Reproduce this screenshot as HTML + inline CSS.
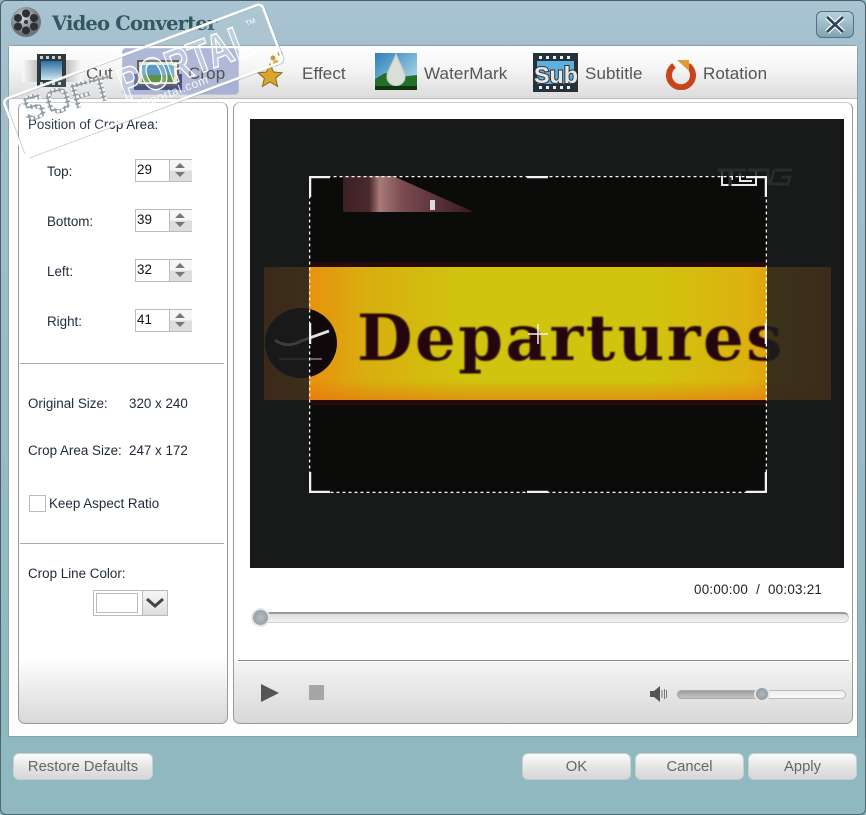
<!DOCTYPE html>
<html><head><meta charset="utf-8"><title>Video Converter</title>
<style>
html,body{margin:0;padding:0;background:#fff}
#w{position:relative;width:866px;height:815px;overflow:hidden;font:13.4px/16px "Liberation Sans",sans-serif;color:#1e2a3a;background:#8fb8bf}
#w div,#w span.t{position:absolute}
.t{position:absolute;white-space:nowrap}
.lbl{font-size:17px;line-height:20px;color:#555;letter-spacing:.1px}
.sp{left:135px;width:57px;height:23px;border:1px solid #bbb;background:#fff;box-sizing:border-box}
.sp i{position:absolute;left:33px;top:0;width:22px;height:21px;border-left:1px solid #bbb;background:linear-gradient(#f6f6f6 50%,#ddd 50%)}
.sp i:before{content:"";position:absolute;left:5px;top:3px;border:5px solid transparent;border-top:0;border-bottom:5px solid #777}
.sp i:after{content:"";position:absolute;left:5px;top:12px;border:5px solid transparent;border-bottom:0;border-top:5px solid #777}
.sp b{position:absolute;left:1px;top:2px;font-weight:400;font-size:13.400px;color:#111}
.hr{height:1px;background:#a8a8a8}
.btn{box-sizing:border-box;height:27px;border:1px solid #c3cfd0;border-radius:6px;background:linear-gradient(#fbfbfb,#e4e4e4 55%,#d6d6d6);text-align:center;font-size:14.800px;line-height:27px;color:#666}
</style></head><body>
<div id="w">
<!-- frame -->
<div style="left:0;top:0;width:866px;height:815px;box-sizing:border-box;border:1px solid #4d5d66;border-radius:6px;background:linear-gradient(#a9c4d2 0,#a4bfcd 46px,#8fb8bf 740px)"></div>
<div style="left:0;top:738px;width:866px;height:77px;box-sizing:border-box;border:1px solid #4d6a70;border-top:0;border-radius:0 0 6px 6px;background:#8fb8bf"></div>
<!-- title -->
<svg style="position:absolute;left:10px;top:6px" width="32" height="32" viewBox="0 0 32 32"><defs><radialGradient id="rg" cx=".4" cy=".35"><stop offset="0" stop-color="#d8d8d8"/><stop offset="1" stop-color="#6e7478"/></radialGradient></defs><circle cx="16" cy="16" r="15" fill="url(#rg)"/><g fill="#2b3036"><circle cx="16" cy="7.500" r="4"/><circle cx="16" cy="24.500" r="4"/><circle cx="8" cy="12" r="4"/><circle cx="24" cy="12" r="4"/><circle cx="8" cy="20.500" r="4"/><circle cx="24" cy="20.500" r="4"/></g><circle cx="16" cy="16" r="2" fill="#333"/></svg>
<span class="t" style="left:52px;top:11px;font:bold 19.500px/26px 'DejaVu Serif',serif;color:#33585f;letter-spacing:-.8px">Video Converter</span>
<div style="left:816px;top:11px;width:38px;height:27px;box-sizing:border-box;border:1px solid #56707c;border-radius:6px;background:linear-gradient(#b5d0dc,#7fa5b4)"></div>
<svg style="position:absolute;left:816px;top:11px" width="38" height="27"><path d="M11 6 L27 21 M27 6 L11 21" stroke="#fff" stroke-width="5"/><path d="M11 6 L27 21 M27 6 L11 21" stroke="#2c4556" stroke-width="2.600"/></svg>
<!-- client -->
<div style="left:8px;top:45px;width:850px;height:692px;box-sizing:border-box;border:1px solid #8aa0a8;border-radius:4px 4px 0 0;background:#fdfdfd"></div>
<div style="left:9px;top:46px;width:848px;height:52px;background:linear-gradient(#fff,#f6f6f6 40%,#dcdcdc);border-bottom:1px solid #bbb"></div>
<!-- toolbar -->
<div style="left:122px;top:48px;width:117px;height:47px;border-radius:4px;background:#a9b2d4;border:1px solid #bcc3db;box-sizing:border-box"></div>
<svg style="position:absolute;left:22px;top:52px" width="60" height="40"><defs><linearGradient id="fb" x1="0" y1="0" x2="0" y2="1"><stop offset="0" stop-color="#2d6fa0"/><stop offset="1" stop-color="#cfe8f0"/></linearGradient><linearGradient id="fd" x1="0" y1="0" x2="1" y2="0"><stop offset="0" stop-color="#fafafa"/><stop offset=".3" stop-color="#b8b8b8"/><stop offset=".7" stop-color="#b8b8b8"/><stop offset="1" stop-color="#fafafa"/></linearGradient></defs><rect x="0" y="8" width="60" height="22" fill="url(#fd)"/><rect x="15" y="2" width="29" height="33" fill="#2e3a40"/><rect x="19" y="9" width="21" height="19" fill="url(#fb)"/><g fill="#c9ced2"><rect x="18" y="4" width="3" height="3"/><rect x="24" y="4" width="3" height="3"/><rect x="30" y="4" width="3" height="3"/><rect x="36" y="4" width="3" height="3"/><rect x="18" y="30" width="3" height="3"/><rect x="24" y="30" width="3" height="3"/><rect x="30" y="30" width="3" height="3"/><rect x="36" y="30" width="3" height="3"/></g></svg>
<span class="t lbl" style="left:86px;top:64px;color:#444">Cut</span>
<svg style="position:absolute;left:130px;top:54px" width="56" height="36"><rect x="4" y="20" width="48" height="16" fill="#37457a"/><rect x="8" y="7" width="40" height="24" fill="#dbe0cf" stroke="#555" stroke-width="2"/><rect x="12" y="11" width="32" height="10" fill="#4d93c2"/><rect x="12" y="21" width="32" height="7" fill="#4f8a3a"/></svg>
<span class="t lbl" style="left:188px;top:64px;color:#444">Crop</span>
<svg style="position:absolute;left:255px;top:50px" width="32" height="42"><path d="M15 14l3.500 8 8.500.8-6.400 5.400 2 8.300-7.600-4.500-7.600 4.500 2-8.300L3 22.800l8.500-.8z" fill="#d9a52c" stroke="#8f6a1a"/><circle cx="21" cy="13" r="3" fill="#d9a52c"/><circle cx="18" cy="8" r="2.500" fill="#c98f24"/><circle cx="25" cy="3.500" r="2.500" fill="#c98f24"/></svg>
<span class="t lbl" style="left:302px;top:64px">Effect</span>
<svg style="position:absolute;left:375px;top:53px" width="42" height="38"><defs><linearGradient id="sk" x1="0" y1="0" x2="1" y2="1"><stop offset="0" stop-color="#2d7fb8"/><stop offset="1" stop-color="#bfe6f2"/></linearGradient></defs><rect x="0" y="0" width="42" height="37" fill="url(#sk)"/><path d="M0 37V26l10-6 14 4 18-2v15z" fill="#256f2b"/><rect y="33" width="42" height="4" fill="#12340f"/><path d="M21 1C17 12 12 18 12 24a9 8.500 0 0 0 18 0C30 18 25 12 21 1z" fill="#d9dfd6" stroke="#c9cfc6"/></svg>
<span class="t lbl" style="left:424px;top:64px">WaterMark</span>
<svg style="position:absolute;left:533px;top:53px" width="46" height="40"><rect x="0" y="0" width="45" height="39" fill="#25323c"/><rect x="4" y="8" width="37" height="23" fill="#5bb0e0"/><g fill="#eee"><rect x="6" y="3" width="3" height="3"/><rect x="13" y="3" width="3" height="3"/><rect x="20" y="3" width="3" height="3"/><rect x="27" y="3" width="3" height="3"/><rect x="34" y="3" width="3" height="3"/><rect x="6" y="33" width="3" height="3"/><rect x="13" y="33" width="3" height="3"/><rect x="20" y="33" width="3" height="3"/><rect x="27" y="33" width="3" height="3"/><rect x="34" y="33" width="3" height="3"/></g><text x="1" y="30" font-family="Liberation Sans" font-weight="700" font-size="23" textLength="44" lengthAdjust="spacingAndGlyphs" fill="#e8e8e8" stroke="#333" stroke-width="2" paint-order="stroke">Sub</text></svg>
<span class="t lbl" style="left:585px;top:64px">Subtitle</span>
<svg style="position:absolute;left:665px;top:58px" width="32" height="32"><path d="M9 7.500a12 12 0 1 0 14 0" fill="none" stroke="#c8441a" stroke-width="6"/><path d="M12 2h12v11z" fill="#e09a3a"/></svg>
<span class="t lbl" style="left:703px;top:64px">Rotation</span>
<!-- left panel -->
<div style="left:18px;top:102px;width:210px;height:622px;box-sizing:border-box;border:1px solid #9a9a9a;border-top-color:#ccc;border-radius:7px;background:linear-gradient(#fff,#fff 555px,#d8d8d8)"></div>
<span class="t" style="left:28px;top:117px">Position of Crop Area:</span>
<span class="t" style="left:47px;top:164px">Top:</span>
<span class="t" style="left:47px;top:214px">Bottom:</span>
<span class="t" style="left:47px;top:264px">Left:</span>
<span class="t" style="left:47px;top:314px">Right:</span>
<div class="sp" style="top:159px"><b>29</b><i></i></div>
<div class="sp" style="top:209px"><b>39</b><i></i></div>
<div class="sp" style="top:259px"><b>32</b><i></i></div>
<div class="sp" style="top:309px"><b>41</b><i></i></div>
<div class="hr" style="left:20px;top:363px;width:204px"></div>
<span class="t" style="left:28px;top:396px">Original Size:</span>
<span class="t" style="left:129px;top:396px">320 x 240</span>
<span class="t" style="left:28px;top:443px">Crop Area Size:</span>
<span class="t" style="left:129px;top:443px">247 x 172</span>
<div style="left:29px;top:495px;width:17px;height:17px;box-sizing:border-box;border:1px solid #bbb;background:#fff"></div>
<span class="t" style="left:49px;top:496px">Keep Aspect Ratio</span>
<div class="hr" style="left:20px;top:543px;width:204px"></div>
<span class="t" style="left:28px;top:566px">Crop Line Color:</span>
<div style="left:93px;top:590px;width:75px;height:26px;box-sizing:border-box;border:1px solid #bbb;background:#fff"></div>
<div style="left:96px;top:593px;width:42px;height:20px;box-sizing:border-box;border:1px solid #bbb;background:#fff"></div>
<div style="left:142px;top:591px;width:25px;height:24px;box-sizing:border-box;border-left:1px solid #bbb;background:linear-gradient(#f5f5f5,#dedede)"></div>
<svg style="position:absolute;left:145px;top:597px" width="20" height="12"><path d="M2 2l8 7 8-7" fill="none" stroke="#444" stroke-width="3"/></svg>
<!-- right panel -->
<div style="left:233px;top:102px;width:620px;height:622px;box-sizing:border-box;border:1px solid #9a9a9a;border-top-color:#ccc;border-radius:7px;background:linear-gradient(#fff,#fff 558px,#f4f4f4 559px,#d8d8d8)"></div>
<!-- video -->
<div style="left:250px;top:119px;width:594px;height:449px;overflow:hidden;background:#0b0b0a">
 <div style="left:14px;top:148px;width:567px;height:133px;background:linear-gradient(90deg,#e06a10 0,#e8920e 8%,#d9ae0e 18%,#d0c40e 35%,#d0c40e 68%,#dcb20e 85%,#e29a10 92%,#e08010)"></div>
 <div style="left:14px;top:261px;width:567px;height:20px;background:linear-gradient(rgba(230,120,16,0),rgba(230,110,16,.55))"></div>
 <div style="left:59px;top:143px;width:458px;height:143px;box-sizing:border-box;border-top:5px solid #26090a;border-bottom:5px solid #26090a"></div>
 <div style="left:15px;top:189px;width:72px;height:70px;border-radius:50%;background:#10080a"></div>
 <svg style="position:absolute;left:17px;top:191px" width="70" height="70" fill="none"><path d="M8 30q12 9 26 1l28-10" stroke="#e4e4e4" stroke-width="2.800"/><path d="M12 49H55" stroke="#bbb" stroke-width="1"/></svg>
 <span class="t" style="left:107px;top:175px;font:bold 64px/90px 'DejaVu Serif',serif;color:#26060e;filter:blur(.7px);letter-spacing:2.500px">Departures</span>
 <svg style="position:absolute;left:60px;top:55px" width="170" height="40"><defs><linearGradient id="pk" x1="0" y1="0" x2="1" y2="0"><stop offset="0" stop-color="#3c2024"/><stop offset=".2" stop-color="#4a2a2c"/><stop offset=".28" stop-color="#a87a78"/><stop offset=".45" stop-color="#7c4c52"/><stop offset="1" stop-color="#35181e"/></linearGradient></defs><path d="M33 2h50l81 36H33z" fill="url(#pk)"/><rect x="120" y="26" width="5" height="10" fill="#ddd"/></svg>
 <svg style="position:absolute;left:462px;top:50px" width="84" height="24"><path d="M10 2v14h34v-14M20 2v9M28 4v8h12" fill="none" stroke="#e8e8e8" stroke-width="2"/></svg>
 <!-- dim -->
 <div style="left:0;top:0;width:594px;height:57px;background:rgba(27,29,29,.84)"></div>
 <div style="left:0;top:374px;width:594px;height:75px;background:rgba(27,29,29,.84)"></div>
 <div style="left:0;top:57px;width:59px;height:317px;background:rgba(27,29,29,.84)"></div>
 <div style="left:517px;top:57px;width:77px;height:317px;background:rgba(27,29,29,.84)"></div>
 <svg style="position:absolute;left:462px;top:45px" width="90" height="30"><path d="M6 6h28M18 6v16M36 6h20v14M62 6h18M62 6l-4 14h18l2-7h-8" fill="none" stroke="#2a2b2b" stroke-width="3"/></svg>
 <!-- crop -->
 <svg style="position:absolute;left:59px;top:57px" width="458" height="317" fill="none" stroke="#f2f2f2" stroke-width="2"><rect x=".5" y=".5" width="457" height="316" stroke="#fff" stroke-width="1.500" stroke-dasharray="3 3"/><path d="M1 21V1H21M437 1H457V21M1 296V316H21M437 316H457V296M218 1H239M218 316H239M1 147V168M457 147V168" stroke-width="2.500"/><path d="M229 148V168M219 158H239" stroke-width="1.500"/></svg>
</div>
<span class="t" style="left:694px;top:582px;color:#222;letter-spacing:.25px">00:00:00&nbsp; / &nbsp;00:03:21</span>
<!-- seek -->
<div style="left:254px;top:612px;width:595px;height:11px;box-sizing:border-box;border-radius:6px;border:1px solid #d0d0d0;border-top:2px solid #9a9a9a;background:linear-gradient(#ddd,#f4f4f4)"></div>
<div style="left:251px;top:608px;width:19px;height:19px;box-sizing:border-box;border-radius:50%;border:2px solid #e6e6e6;background:radial-gradient(#b4bcc2,#8c969c)"></div>
<div class="hr" style="left:238px;top:660px;width:611px;background:#888"></div>
<!-- controls -->
<svg style="position:absolute;left:260px;top:683px" width="20" height="20"><path d="M1 1L19 10 1 19z" fill="#555"/></svg>
<div style="left:309px;top:685px;width:15px;height:15px;background:#a6a6a6"></div>
<svg style="position:absolute;left:649px;top:685px" width="20" height="18"><path d="M1 6h4l6-5v16l-6-5H1z" fill="#555"/><path d="M13 5v8M15.500 4v10M17.500 5v8" stroke="#777"/></svg>
<div style="left:677px;top:690px;width:169px;height:9px;box-sizing:border-box;border-radius:5px;border:1px solid #bbb;background:linear-gradient(#eee,#fafafa)"></div>
<div style="left:677px;top:690px;width:84px;height:9px;box-sizing:border-box;border-radius:5px 0 0 5px;border:1px solid #aaa;background:linear-gradient(#9e9e9e,#c4c4c4)"></div>
<div style="left:754px;top:686px;width:16px;height:16px;box-sizing:border-box;border-radius:50%;border:2px solid #e6e6e6;background:radial-gradient(#b0b8be,#88929a)"></div>
<!-- buttons -->
<div class="btn" style="left:13px;top:753px;width:140px">Restore Defaults</div>
<div class="btn" style="left:522px;top:753px;width:109px">OK</div>
<div class="btn" style="left:635px;top:753px;width:109px">Cancel</div>
<div class="btn" style="left:748px;top:753px;width:109px">Apply</div>
<!-- watermark -->
<svg style="position:absolute;left:0;top:0" width="300" height="180" fill="none">
<defs><pattern id="dots" width="4.500" height="4.500" patternUnits="userSpaceOnUse"><rect width="4.500" height="4.500" fill="#8f9aa0"/><rect x="1" y="1" width="2.800" height="2.800" fill="#fff"/></pattern></defs>
<g transform="translate(3 100) rotate(-20.500)">
<rect x="1.500" y="1.500" width="276" height="62" rx="5" stroke="#8e9ca4" stroke-opacity=".6" stroke-width="1"/>
<rect x="0" y="0" width="276" height="62" rx="5" fill="#fff" fill-opacity=".08" stroke="#fff" stroke-width="2.500"/>
<text x="114" y="44" font-family="Liberation Sans" font-weight="700" font-size="46" textLength="140" lengthAdjust="spacingAndGlyphs" fill="#fff" fill-opacity=".2" stroke="#fff" stroke-width="1.500">PORTAL</text>
<text x="85" y="56" font-family="Liberation Sans" font-size="12" textLength="114" fill="#fff" fill-opacity=".9">www.softportal.com</text>
<text x="254" y="16" font-family="Liberation Sans" font-size="7" fill="#fff">TM</text>
</g>
<text transform="translate(26 122) rotate(-15)" font-family="Liberation Sans" font-weight="700" font-size="36" textLength="92" lengthAdjust="spacingAndGlyphs" fill="url(#dots)">SOFT</text>
</svg>
</div>
</body></html>
